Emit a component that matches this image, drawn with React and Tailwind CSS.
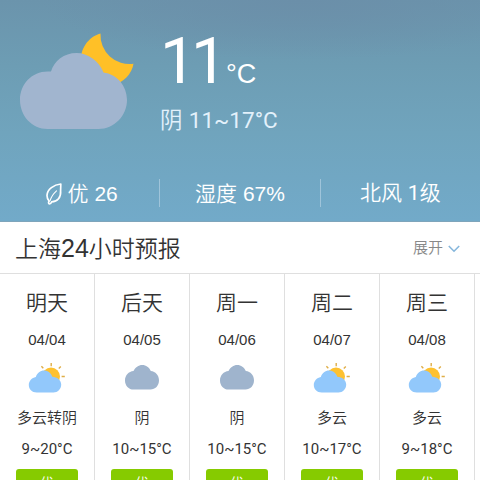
const DAYS = [
  { name: "明天", date: "04/04", icon: "cloudy", text: "多云转阴", temp: "9~20°C", air: "优" },
  { name: "后天", date: "04/05", icon: "overcast", text: "阴", temp: "10~15°C", air: "优" },
  { name: "周一", date: "04/06", icon: "overcast", text: "阴", temp: "10~15°C", air: "优" },
  { name: "周二", date: "04/07", icon: "cloudy", text: "多云", temp: "10~17°C", air: "优" },
  { name: "周三", date: "04/08", icon: "cloudy", text: "多云", temp: "9~18°C", air: "优" },
];

function NightCloudIcon() {
  return (
    <svg width="116" height="98" viewBox="0 0 116 98" className="shrink-0">
      <path d="M81.5 1.5 C69 5 61 17 62 30 C64 46 79 55 94 53 C104 51 113 42 114.5 31.8 A29 29 0 0 1 81.5 1.5Z" fill="#ffc027" />
      <path
        d="M28.5 39.5 H32 C35 29 45 21 57.5 21 C69 21 80 29 84.5 40.5 C98 42 108 54 108 68 C108 84 95 97 79.5 97 H28.5 C13 97 1 84 1 68 C1 52 13 39.5 28.5 39.5Z"
        fill="#a1b5cf"
      />
    </svg>
  );
}

function OvercastIcon() {
  return (
    <svg width="40" height="34" viewBox="0 0 40 34">
      <path
        d="M11.5 8 C13.3 4.4 16.5 2 20.3 2 C24 2 27.3 4.4 28.8 8 C33.5 8.4 37 12.4 37 17.2 C37 22.6 33.3 26.5 28.4 26.5 H11.6 C6.7 26.5 3 22.6 3 17.4 C3 12.5 6.7 8.3 11.5 8Z"
        fill="#9fb4cd"
      />
    </svg>
  );
}

function CloudyIcon() {
  return (
    <svg width="40" height="34" viewBox="0 0 40 34">
      <circle cx="24" cy="13.6" r="9" fill="#fdc130" />
      <path
        d="M24.2 0V3.2 M14.4 3.2L16.3 5.3 M33.8 3.5L31.8 5.6 M34.6 13.5H37.8"
        stroke="#dfae48"
        strokeWidth="1.4"
      />
      <path
        d="M8.8 14 C10.2 10 13.3 7.5 17 7.5 C21 7.5 24.2 10.2 25.3 13.7 C30 13.9 34.2 17 34.2 21.5 C34.2 26 30.6 29.5 26.5 29.5 H9.7 C5 29.5 1.8 26.2 1.8 22 C1.8 18.2 4.8 14.7 8.8 14Z"
        fill="#92c8fb"
      />
    </svg>
  );
}

function LeafIcon() {
  return (
    <svg width="18" height="24" viewBox="0 0 18 24" fill="none" stroke="#fff" strokeLinecap="round" strokeLinejoin="round">
      <path
        d="M15.8 2 C9 2.6 2.2 7.2 2 13.4 C2 16 2.8 17.8 4.2 19.2 C3.2 20.2 3.3 21.9 4.6 22 C5.9 22 6.3 20.8 6.6 19.8 C12.5 19.6 16.2 15.5 15.6 8.5Z"
        strokeWidth="1.7"
      />
      <path d="M5.2 18.5 C6 15 8.3 11.8 11.5 8.8" strokeWidth="1.1" />
    </svg>
  );
}

function Stat({ children }) {
  return <div className="flex flex-1 items-center justify-center pt-px whitespace-pre">{children}</div>;
}

function DayCard({ day }) {
  return (
    <li className="flex w-[95px] shrink-0 flex-col items-center border-r border-[#dfdfdf] whitespace-nowrap text-[#333]">
      <p className="mt-[13px] text-[21px] leading-8">{day.name}</p>
      <p className="mt-[9px] text-[15px] leading-6">{day.date}</p>
      <div className="mt-[11px] h-[34px]">
        {day.icon === "cloudy" ? <CloudyIcon /> : <OvercastIcon />}
      </div>
      <p className="mt-[9px] text-[15px] leading-6">{day.text}</p>
      <p className="mt-[7px] font-['Roboto',sans-serif] text-[15px] leading-6 font-normal">{day.temp}</p>
      <span className="mt-[8px] h-6 w-[62px] rounded-[3px] bg-[#86cb00] pt-[2px] text-center text-[14px] leading-6 text-white">
        {day.air}
      </span>
    </li>
  );
}

export default function App() {
  return (
    <div className="flex h-[480px] w-[480px] flex-col overflow-hidden bg-white font-['Liberation_Sans','Noto_Sans_CJK_SC',sans-serif] font-[350]">
      <section className="flex h-[222px] shrink-0 flex-col border-b border-[#7fa5bb] bg-[radial-gradient(ellipse_260px_60px_at_300px_0px,#6b8fa9_0%,transparent_100%),linear-gradient(to_bottom,#6b94ac_0%,#6d9db4_30%,#70a4bd_60%,#72aac9_100%)] text-white">
        <div className="flex pt-8 pl-[19px]">
          <NightCloudIcon />
          <div className="ml-[25px]">
            <p className="flex h-[60px] items-baseline leading-[60px]">
              <span className="w-[66px] font-['Roboto',sans-serif] text-[64px] font-[450] tracking-[-5px]">11</span>
              <span className="text-[27px]">°C</span>
            </p>
            <p className="mt-3 text-[22.5px] leading-8 text-[#e3f1fb]">
              阴 <span className="font-['Roboto',sans-serif] font-normal">11~17°C</span>
            </p>
          </div>
        </div>
        <div className="mt-[42px] flex h-7 divide-x divide-[#9fc4da] text-[21px]">
          <Stat>
            <span className="flex items-center pl-[3px]">
              <LeafIcon />
              <span className="ml-[5px]">优 26</span>
            </span>
          </Stat>
          <Stat>湿度 67%</Stat>
          <Stat>
            <span>
              北风 <span className="font-['Roboto',sans-serif] font-normal">1</span>级
            </span>
          </Stat>
        </div>
      </section>

      <header className="flex h-[51px] shrink-0 items-center justify-between pr-5 pl-[15px]">
        <h1 className="flex items-baseline pt-[2px] text-[23px] font-[350] text-[#333]">
          上海
          <span className="text-[25px]">24</span>
          小时预报
        </h1>
        <button className="flex items-center gap-[5px] pt-[2px] text-[15px] text-[#888]">
          展开
          <svg width="12" height="8" viewBox="0 0 12 8" fill="none" stroke="#86b7dc" strokeWidth="1.6">
            <path d="M0.8 1 L6 6.2 L11.2 1" />
          </svg>
        </button>
      </header>

      <ul className="flex min-h-0 flex-1 overflow-hidden border-t border-[#dfdfdf]">
        {DAYS.map((day) => (
          <DayCard key={day.date} day={day} />
        ))}
      </ul>
    </div>
  );
}
